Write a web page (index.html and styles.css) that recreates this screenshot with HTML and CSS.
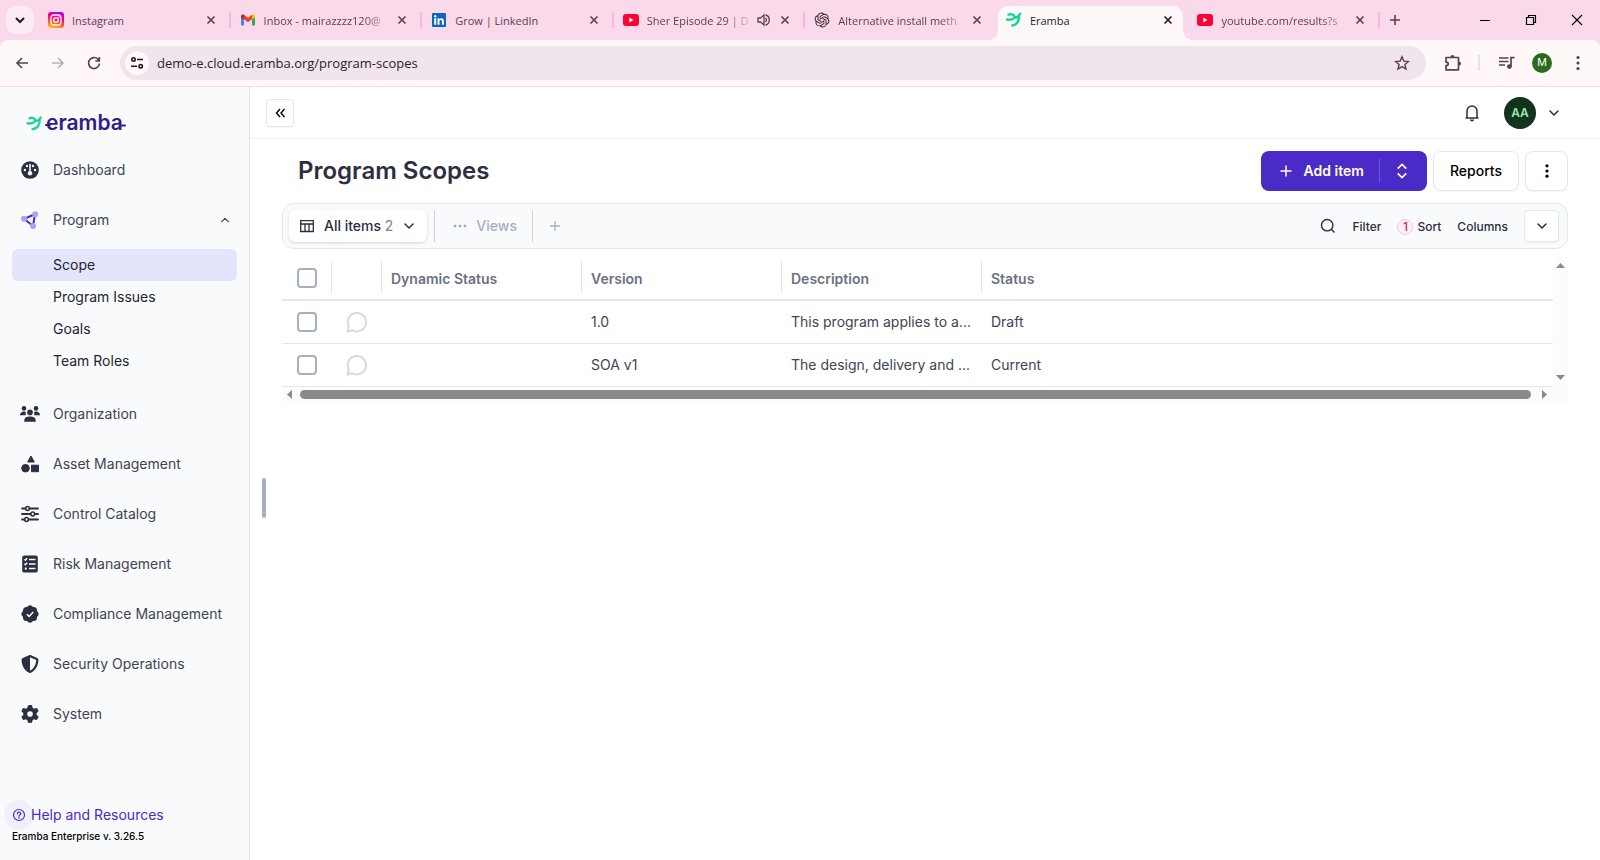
FILE: index.html
```html
<!DOCTYPE html>
<html lang="en">
<head>
<meta charset="utf-8">
<title>Eramba</title>
<link rel="stylesheet" href="styles.css">
</head>
<body>
<svg class="defs" aria-hidden="true">
  <symbol id="close" viewBox="0 0 10 10"><path d="M1.5 1.5l7 7M8.5 1.5l-7 7" fill="none" stroke="currentColor" stroke-width="1.6"/></symbol>
  <symbol id="chevron" viewBox="0 0 12 12"><path d="M2 4l4 4 4-4" fill="none" stroke="currentColor" stroke-width="1.5" stroke-linecap="round" stroke-linejoin="round"/></symbol>
  <symbol id="youtube" viewBox="0 0 16 16"><rect y="2" width="16" height="12" rx="3" fill="#ff0033"/><path d="M6.300 5.500l4.200 2.500-4.200 2.500z" fill="#fff"/></symbol>
  <symbol id="leaf" viewBox="0 0 16 16"><path d="M2.500 2.600C5 1.700 8 2.300 8.500 4.600 8.900 6.600 5 8.200 1.200 7.600M8.500 5.200c2 .6 4.300-.8 5.600-3.400M13 3.800c.5 4.500-1.800 9-6.600 9.700" fill="none" stroke="currentColor" stroke-width="2.500" stroke-linecap="round" stroke-linejoin="round"/></symbol>
  <symbol id="comment" viewBox="0 0 22 22"><path d="M1.500 20.700l1.300-5.200A9.200 9.200 0 1 1 6.600 19.300z" fill="none" stroke="currentColor" stroke-width="2" stroke-linejoin="round"/></symbol>
</svg>

<header class="browser">
  <div class="tabstrip">
    <button class="tab-search" aria-label="Search tabs"><svg width="12" height="12" viewBox="0 0 12 12"><path d="M2 4l4 4 4-4" fill="none" stroke="currentColor" stroke-width="2"/></svg></button>
    <div class="tabs">
      <div class="tab"><button class="tab-main">
        <svg width="16" height="16" viewBox="0 0 16 16"><defs><linearGradient id="ig" x1="0.200" y1="1" x2="0.500" y2="0"><stop offset="0" stop-color="#ffc800"/><stop offset="0.350" stop-color="#ff5a2a"/><stop offset="0.650" stop-color="#ff0078"/><stop offset="1" stop-color="#b900f0"/></linearGradient></defs><rect width="16" height="16" rx="3" fill="url(#ig)"/><rect x="3" y="3" width="10" height="10" rx="3" fill="none" stroke="#fff" stroke-width="1.300"/><circle cx="8" cy="8" r="2.400" fill="none" stroke="#fff" stroke-width="1.300"/><circle cx="11" cy="5" r=".7" fill="#fff"/></svg>
        <span class="tab-title">Instagram</span></button><button class="tab-close" aria-label="Close Instagram"><svg width="10" height="10"><use href="#close"/></svg></button></div>
      <div class="tab"><button class="tab-main">
        <svg width="16" height="16" viewBox="0 0 16 16"><path d="M1 4v8.500a1 1 0 0 0 1 1h2V7z" fill="#4285f4"/><path d="M15 4v8.500a1 1 0 0 1-1 1h-2V7z" fill="#34a853"/><path d="M1 4.200C1 2.400 3 2 4 2.800V7.500L1 5.500z" fill="#c5221f"/><path d="M4 2.800l4 3 4-3v4.500l-4 3-4-3z" fill="#ea4335"/><path d="M12 2.800c1-.8 3-.4 3 1.400v1.300l-3 2z" fill="#fbbc04"/></svg>
        <span class="tab-title faded">Inbox - mairazzzz120@</span></button><button class="tab-close" aria-label="Close Inbox"><svg width="10" height="10"><use href="#close"/></svg></button></div>
      <div class="tab"><button class="tab-main">
        <svg width="16" height="16" viewBox="0 0 16 16"><rect x="1" y="1" width="14" height="14" rx="1" fill="#0a66c2"/><path d="M3.200 6.300h2v6.500h-2zM6.500 6.300h1.900v.9c.9-1.500 4.500-1.500 4.500 1.700v3.900h-2V9.500c0-2-2.400-1.800-2.400 0v3.300h-2z" fill="#fff"/><circle cx="4.200" cy="4.200" r="1.200" fill="#fff"/></svg>
        <span class="tab-title">Grow | LinkedIn</span></button><button class="tab-close" aria-label="Close LinkedIn"><svg width="10" height="10"><use href="#close"/></svg></button></div>
      <div class="tab"><button class="tab-main">
        <svg width="16" height="16"><use href="#youtube"/></svg>
        <span class="tab-title faded">Sher Episode 29 | D</span>
        <svg width="14" height="14" viewBox="0 0 14 14"><path d="M1 5h2.500L7 2v10L3.500 9H1z" fill="none" stroke="currentColor" stroke-width="1.300"/><path d="M8.500 5c1.200 1 1.200 3 0 4M8.500 2c5 1 5 9 0 10" fill="none" stroke="currentColor" stroke-width="1.300"/></svg></button><button class="tab-close" aria-label="Close Sher Episode 29"><svg width="10" height="10"><use href="#close"/></svg></button></div>
      <div class="tab tab-before-active"><button class="tab-main">
        <svg width="16" height="16" viewBox="-1 -1 26 26"><path fill="#2a2228" d="M22.2819 9.8211a5.9847 5.9847 0 0 0-.5157-4.9108 6.0462 6.0462 0 0 0-6.5098-2.9A6.0651 6.0651 0 0 0 4.9807 4.1818a5.9847 5.9847 0 0 0-3.9977 2.9 6.0462 6.0462 0 0 0 .7427 7.0966 5.98 5.98 0 0 0 .511 4.9107 6.051 6.051 0 0 0 6.5146 2.9001A5.9847 5.9847 0 0 0 13.2599 24a6.0557 6.0557 0 0 0 5.7718-4.2058 5.9894 5.9894 0 0 0 3.9977-2.9001 6.0557 6.0557 0 0 0-.7475-7.0729zm-9.022 12.6081a4.4755 4.4755 0 0 1-2.8764-1.0408l.1419-.0804 4.7783-2.7582a.7948.7948 0 0 0 .3927-.6813v-6.7369l2.02 1.1686a.071.071 0 0 1 .038.052v5.5826a4.504 4.504 0 0 1-4.4945 4.4944zm-9.6607-4.1254a4.4708 4.4708 0 0 1-.5346-3.0137l.142.0852 4.783 2.7582a.7712.7712 0 0 0 .7806 0l5.8428-3.3685v2.3324a.0804.0804 0 0 1-.0332.0615L9.74 19.9502a4.4992 4.4992 0 0 1-6.1408-1.6464zM2.3408 7.8956a4.485 4.485 0 0 1 2.3655-1.9728V11.6a.7664.7664 0 0 0 .3879.6765l5.8144 3.3543-2.0201 1.1685a.0757.0757 0 0 1-.071 0l-4.8303-2.7865A4.504 4.504 0 0 1 2.3408 7.872zm16.5963 3.8558L13.1038 8.364 15.1192 7.2a.0757.0757 0 0 1 .071 0l4.8303 2.7913a4.4944 4.4944 0 0 1-.6765 8.1042v-5.6772a.79.79 0 0 0-.407-.667zm2.0107-3.0231l-.142-.0852-4.7735-2.7818a.7759.7759 0 0 0-.7854 0L9.409 9.2297V6.8974a.0662.0662 0 0 1 .0284-.0615l4.8303-2.7866a4.4992 4.4992 0 0 1 6.6802 4.66zM8.3065 12.863l-2.02-1.1638a.0804.0804 0 0 1-.038-.0567V6.0742a4.4992 4.4992 0 0 1 7.3757-3.4537l-.142.0805L8.704 5.459a.7948.7948 0 0 0-.3927.6813zm1.0976-2.3654l2.602-1.4998 2.6069 1.4998v2.9994l-2.5974 1.4997-2.6067-1.4997Z"/></svg>
        <span class="tab-title faded">Alternative install meth</span></button><button class="tab-close" aria-label="Close Alternative install methods"><svg width="10" height="10"><use href="#close"/></svg></button></div>
      <div class="tab tab-active"><button class="tab-main">
        <svg class="leaf" width="16" height="16"><use href="#leaf"/></svg>
        <span class="tab-title">Eramba</span></button><button class="tab-close" aria-label="Close Eramba"><svg width="10" height="10"><use href="#close"/></svg></button></div>
      <div class="tab"><button class="tab-main">
        <svg width="16" height="16"><use href="#youtube"/></svg>
        <span class="tab-title faded">youtube.com/results?s</span></button><button class="tab-close" aria-label="Close YouTube"><svg width="10" height="10"><use href="#close"/></svg></button></div>
    </div>
    <div class="window-side">
      <button class="new-tab" aria-label="New tab"><svg width="12" height="12" viewBox="0 0 12 12"><path d="M6 1v10M1 6h10" stroke="currentColor" stroke-width="1.600"/></svg></button>
      <div class="window-controls">
        <button aria-label="Minimize"><svg width="12" height="12" viewBox="0 0 12 12"><path d="M1 6.500h10" stroke="currentColor"/></svg></button>
        <button aria-label="Restore"><svg width="12" height="12" viewBox="0 0 12 12"><path d="M1.500 3.500h7v7h-7zM3.500 3.500v-2h7v7h-2" fill="none" stroke="currentColor" stroke-width="1.200"/></svg></button>
        <button aria-label="Close window"><svg width="12" height="12" viewBox="0 0 12 12"><path d="M1 1l10 10M11 1L1 11" stroke="currentColor" stroke-width="1.200"/></svg></button>
      </div>
    </div>
  </div>
  <div class="toolbar">
    <div class="nav-buttons">
      <button aria-label="Back"><svg width="16" height="16" viewBox="0 0 16 16"><path d="M14 8H3M8 3L3 8l5 5" fill="none" stroke="currentColor" stroke-width="1.600"/></svg></button>
      <button aria-label="Forward" disabled><svg width="16" height="16" viewBox="0 0 16 16"><path d="M2 8h11M8 3l5 5-5 5" fill="none" stroke="currentColor" stroke-width="1.600"/></svg></button>
      <button aria-label="Reload"><svg width="16" height="16" viewBox="0 0 16 16"><path d="M13.500 8.500a5.500 5.500 0 1 1-1.600-4.400L13.200 5.500M13.300 2v4H9.300" fill="none" stroke="currentColor" stroke-width="1.700"/></svg></button>
    </div>
    <div class="omnibox">
      <button class="site-info" aria-label="View site information"><svg width="14" height="14" viewBox="0 0 14 14"><g fill="none" stroke="currentColor" stroke-width="1.600"><circle cx="3.500" cy="3.500" r="1.700"/><path d="M7 3.500h6M1 10.200h6"/><circle cx="10.700" cy="10.200" r="1.700"/></g></svg></button>
      <input class="url" type="text" aria-label="Address" value="demo-e.cloud.eramba.org/program-scopes">
      <button class="star" aria-label="Bookmark"><svg width="16" height="16" viewBox="0 0 16 16"><path d="M8 1.800l1.800 4.300 4.600.4-3.500 3 1.100 4.500L8 11.600 4 14l1.100-4.500-3.500-3 4.600-.4z" fill="none" stroke="currentColor" stroke-width="1.400"/></svg></button>
    </div>
    <button class="puzzle" aria-label="Extensions"><svg width="18" height="18" viewBox="0 0 18 18"><path d="M2 3.500h12.500v12.300H2v-4.200c3-.2 3-3.200 0-3.400z" fill="none" stroke="currentColor" stroke-width="1.700" stroke-linejoin="round"/><path d="M6.500 3a2 2 0 0 1 4 0zM15 7.500a2 2 0 0 1 0 4z" fill="currentColor"/></svg></button>
    <span class="toolbar-rule"></span>
    <button class="media" aria-label="Media controls"><svg width="18" height="16" viewBox="0 0 18 16"><path d="M1 3h9.500M1 6.500h9.500M1 10h6" stroke="currentColor" stroke-width="1.600"/><path d="M13 11.500V2.700h3.500" fill="none" stroke="currentColor" stroke-width="1.700"/><circle cx="11.400" cy="11.600" r="2.400" fill="currentColor"/></svg></button>
    <button class="profile" aria-label="Profile">M</button>
    <button class="menu" aria-label="Browser menu"><svg width="4" height="16" viewBox="0 0 4 16"><g fill="currentColor"><circle cx="2" cy="2.500" r="1.600"/><circle cx="2" cy="8" r="1.600"/><circle cx="2" cy="13.500" r="1.600"/></g></svg></button>
  </div>
</header>

<div class="app">
  <aside class="sidebar">
    <a class="logo" href="#" aria-label="eramba">
      <svg width="104" height="26" viewBox="0 0 104 26"><g fill="none" stroke="#1fd49a" stroke-width="2.400" stroke-linecap="round"><path d="M4.500 7.300c2.600-1.300 5.600 0 5.600 2 0 2.400-4 3.700-7.600 3M10.100 9.800c2.300.4 4.500-1 5.600-3.300M14.600 8.500c.4 4.500-1.800 9-7.100 9.600"/></g><text x="21" y="19" class="wordmark">eramba</text><g stroke="#2f1f85" stroke-width="2" stroke-linecap="round"><path d="M21 14h4M97 14.500h3"/></g></svg>
    </a>
    <nav class="nav">
      <a class="nav-item" href="#"><svg width="18" height="18" viewBox="0 0 18 18"><circle cx="9" cy="9" r="8.800" fill="#2b2f40"/><g fill="#f9fafc"><circle cx="6" cy="5" r="1.200"/><circle cx="12" cy="5" r="1.200"/><circle cx="3.900" cy="9" r="1.200"/><circle cx="14.100" cy="9" r="1.200"/><rect x="8.200" y="2.800" width="1.600" height="8" rx=".8"/><circle cx="9" cy="12.200" r="2.200"/></g></svg><span>Dashboard</span></a>
      <button class="nav-item" aria-expanded="true"><svg width="18" height="18" viewBox="0 0 18 18"><path d="M14 3L3.300 8 12 15z" fill="none" stroke="#4a2bc7" stroke-width="2"/><g fill="#a8a4f5"><circle cx="14.200" cy="3.200" r="3"/><circle cx="3" cy="7.800" r="3"/><circle cx="12" cy="15" r="3"/></g></svg><span>Program</span><svg class="caret" width="10" height="10"><use href="#chevron"/></svg></button>
      <div class="subnav">
        <a class="current" href="#">Scope</a>
        <a href="#">Program Issues</a>
        <a href="#">Goals</a>
        <a href="#">Team Roles</a>
      </div>
      <a class="nav-item" href="#"><svg width="18" height="18" viewBox="0 0 18 18" overflow="visible"><g fill="#2b2f40"><circle cx="3" cy="3.400" r="2.300"/><circle cx="15" cy="3.400" r="2.300"/><circle cx="9" cy="7.400" r="2.800"/><path d="M-1 10.200c0-4 5-4.500 6-2.700-.6 1-.5 2 0 2.700zM19 10.200c0-4-5-4.500-6-2.700.6 1 .5 2 0 2.700zM3.300 16.800c-.5-5 3-5.400 5.700-5.400s6.200.4 5.700 5.400z"/></g></svg><span>Organization</span></a>
      <a class="nav-item" href="#"><svg width="18" height="18" viewBox="0 0 18 18"><g fill="#2b2f40" stroke="#2b2f40" stroke-linejoin="round"><path d="M10 1l3.300 6H6.700z"/><circle cx="4.500" cy="13.200" r="3.800"/><path d="M10.500 10.200h7v6.500h-7z"/></g></svg><span>Asset Management</span></a>
      <a class="nav-item" href="#"><svg width="18" height="18" viewBox="0 0 18 18"><g fill="none" stroke="#2b2f40" stroke-width="1.800" stroke-linecap="round"><path d="M1 3.500h3.500M8.500 3.500H17M1 9h8.500M14 9h3M1 14.500h2.500M8 14.500h9"/><g stroke-width="1.500"><circle cx="6.500" cy="3.500" r="1.900"/><circle cx="11.700" cy="9" r="1.900"/><circle cx="5.500" cy="14.500" r="1.900"/></g></g></svg><span>Control Catalog</span></a>
      <a class="nav-item" href="#"><svg width="18" height="18" viewBox="0 0 18 18"><rect x="1.200" y=".4" width="15.600" height="17.200" rx="2.200" fill="#2b2f40"/><g stroke="#f9fafc" stroke-width="1.400" fill="none"><path d="M8 4.500h6.500M8 9h6.500M8 13.500h6.500M3.500 4.300l1 1 1.600-2M3.500 8.800l1 1 1.600-2"/></g><rect x="3.800" y="12.600" width="2" height="2" fill="#f9fafc"/></svg><span>Risk Management</span></a>
      <a class="nav-item" href="#"><svg width="18" height="18" viewBox="0 0 18 18"><g fill="#2b2f40"><rect x="2" y="2" width="14" height="14" rx="3.500"/><rect x="2" y="2" width="14" height="14" rx="3.500" transform="rotate(45 9 9)"/></g><path d="M5.800 9.200l2.300 2.200 4.200-4.300" fill="none" stroke="#f9fafc" stroke-width="1.500"/></svg><span>Compliance Management</span></a>
      <a class="nav-item" href="#"><svg width="18" height="18" viewBox="0 0 512 512"><path fill="#2b2f40" d="M256 0c4.600 0 9.200 1 13.400 2.900L457.700 82.800c22 9.300 38.400 31 38.300 57.200c-.5 99.200-41.300 280.700-213.600 363.200c-16.700 8-36.100 8-52.800 0C57.300 420.700 16.500 239.200 16 140c-.1-26.200 16.300-47.900 38.300-57.200L242.700 2.900C246.800 1 251.400 0 256 0zm0 66.800V444.800C394 378 431.100 230.100 432 141.400L256 66.800z"/></svg><span>Security Operations</span></a>
      <a class="nav-item" href="#"><svg width="18" height="18" viewBox="0 0 512 512"><path fill="#2b2f40" d="M495.900 166.600c3.200 8.700 .5 18.400-6.400 24.600l-43.300 39.400c1.100 8.300 1.700 16.800 1.700 25.400s-.6 17.100-1.700 25.400l43.300 39.400c6.900 6.200 9.600 15.900 6.400 24.600c-4.400 11.900-9.700 23.300-15.800 34.300l-4.700 8.100c-6.600 11-14 21.400-22.100 31.200c-5.900 7.200-15.700 9.600-24.500 6.800l-55.700-17.700c-13.400 10.300-28.200 18.900-44 25.400l-12.500 57.100c-2 9.100-9 16.300-18.200 17.800c-13.800 2.300-28 3.500-42.500 3.500s-28.700-1.200-42.500-3.500c-9.200-1.500-16.200-8.700-18.200-17.800l-12.500-57.100c-15.800-6.500-30.600-15.100-44-25.400L83.100 425.900c-8.800 2.800-18.600 .3-24.500-6.800c-8.100-9.800-15.500-20.200-22.100-31.200l-4.700-8.100c-6.100-11-11.400-22.400-15.800-34.300c-3.200-8.700-.5-18.400 6.400-24.600l43.300-39.400C64.600 273.100 64 264.600 64 256s.6-17.100 1.700-25.400L22.400 191.200c-6.900-6.200-9.600-15.900-6.400-24.600c4.400-11.900 9.700-23.300 15.800-34.300l4.700-8.100c6.600-11 14-21.400 22.100-31.200c5.900-7.200 15.700-9.600 24.500-6.800l55.700 17.700c13.400-10.300 28.200-18.900 44-25.400l12.500-57.100c2-9.100 9-16.300 18.200-17.800C227.300 1.200 241.500 0 256 0s28.700 1.200 42.500 3.500c9.200 1.500 16.200 8.700 18.200 17.800l12.500 57.100c15.800 6.500 30.600 15.100 44 25.400l55.700-17.700c8.800-2.800 18.600-.3 24.500 6.800c8.100 9.800 15.500 20.200 22.100 31.200l4.700 8.100c6.100 11 11.400 22.400 15.800 34.300zM256 336a80 80 0 1 0 0-160 80 80 0 1 0 0 160z"/></svg><span>System</span></a>
    </nav>
    <footer class="sidebar-foot">
      <a class="help" href="#"><span class="help-icon"><svg width="14" height="14" viewBox="0 0 14 14"><g fill="none" stroke="currentColor" stroke-width="1.200" stroke-linecap="round"><circle cx="7" cy="7" r="5.500"/><path d="M5.400 5.800c0-2.200 3.300-2.100 3.300-.1C8.700 7 7 6.900 7 8.100"/></g><circle cx="7" cy="9.900" r=".8" fill="currentColor"/></svg></span><span>Help and Resources</span></a>
      <p class="version">Eramba Enterprise v. 3.26.5</p>
    </footer>
  </aside>

  <div class="gutter"><span class="grip"></span></div>

  <div class="content">
    <div class="topbar">
      <button class="collapse" aria-label="Collapse sidebar"><svg width="12" height="12" viewBox="0 0 12 12"><path d="M6 2L2.500 6 6 10M10.500 2L7 6l3.500 4" fill="none" stroke="currentColor" stroke-width="1.400"/></svg></button>
      <div class="account">
        <button class="bell" aria-label="Notifications"><svg width="16" height="18" viewBox="0 0 16 18"><path d="M3 13.500V7a5 5 0 0 1 10 0v6.500M1.500 14h13" fill="none" stroke="currentColor" stroke-width="1.500"/><path d="M6 15.600h4a2 2 0 0 1-4 0z" fill="currentColor"/></svg></button>
        <button class="avatar">AA</button>
        <button class="account-menu" aria-label="Account menu"><svg width="12" height="12"><use href="#chevron"/></svg></button>
      </div>
    </div>

    <main class="page">
      <div class="page-head">
        <h1>Program Scopes</h1>
        <div class="actions">
          <div class="split">
            <button class="add"><svg width="12" height="12" viewBox="0 0 12 12"><path d="M6 .5v11M.5 6h11" stroke="currentColor" stroke-width="1.500"/></svg>Add item</button>
            <button class="add-more" aria-label="More add options"><svg width="12" height="16" viewBox="0 0 12 16"><path d="M1.700 5.700L6 1.500l4.300 4.200M1.700 10.300L6 14.500l4.300-4.200" fill="none" stroke="currentColor" stroke-width="1.700"/></svg></button>
          </div>
          <button class="outlined">Reports</button>
          <button class="outlined more" aria-label="More actions"><svg width="4" height="16" viewBox="0 0 4 16"><g fill="currentColor"><circle cx="2" cy="2.800" r="1.600"/><circle cx="2" cy="8" r="1.600"/><circle cx="2" cy="13.200" r="1.600"/></g></svg></button>
        </div>
      </div>

      <div class="viewbar">
        <button class="all-items"><svg width="14" height="14" viewBox="0 0 14 14"><path d="M.7 1.700h12.600v10.800H.7zM.7 5h12.600M5 5v7.500M9 5v7.500" fill="none" stroke="currentColor" stroke-width="1.300"/></svg><span>All items <span class="count">2</span></span><svg width="12" height="12"><use href="#chevron"/></svg></button>
        <button class="views"><svg width="14" height="4" viewBox="0 0 14 4"><g fill="currentColor"><circle cx="2" cy="2" r="1.500"/><circle cx="7" cy="2" r="1.500"/><circle cx="12" cy="2" r="1.500"/></g></svg>Views</button>
        <button class="add-view" aria-label="Add view"><svg width="10" height="10" viewBox="0 0 10 10"><path d="M5 0v10M0 5h10" stroke="currentColor" stroke-width="1.300"/></svg></button>
        <div class="tools">
          <button aria-label="Search"><svg width="16" height="16" viewBox="0 0 16 16"><circle cx="7.200" cy="7.200" r="5.700" fill="none" stroke="currentColor" stroke-width="1.400"/><path d="M11.500 11.500l3 3" stroke="currentColor" stroke-width="1.400"/></svg></button>
          <button class="tool">Filter</button>
          <button class="tool sort"><span class="badge">1</span>Sort</button>
          <button class="tool">Columns</button>
          <button class="expand" aria-label="Expand"><svg width="12" height="12"><use href="#chevron"/></svg></button>
        </div>
      </div>

      <div class="grid">
        <table>
          <colgroup><col class="c-icon"><col class="c-icon"><col class="c-data"><col class="c-data"><col class="c-data"><col></colgroup>
          <thead>
            <tr>
              <th><div class="head pick"><input type="checkbox" aria-label="Select all"></div></th>
              <th><div class="head"></div></th>
              <th><div class="head">Dynamic Status</div></th>
              <th><div class="head">Version</div></th>
              <th><div class="head">Description</div></th>
              <th><div class="head last">Status</div></th>
            </tr>
          </thead>
          <tbody>
            <tr>
              <td class="pick"><input type="checkbox" aria-label="Select 1.0"></td>
              <td class="note"><button aria-label="Comments"><svg width="22" height="22"><use href="#comment"/></svg></button></td>
              <td></td><td>1.0</td><td>This program applies to a...</td><td>Draft</td>
            </tr>
            <tr>
              <td class="pick"><input type="checkbox" aria-label="Select SOA v1"></td>
              <td class="note"><button aria-label="Comments"><svg width="22" height="22"><use href="#comment"/></svg></button></td>
              <td></td><td>SOA v1</td><td>The design, delivery and ...</td><td>Current</td>
            </tr>
          </tbody>
        </table>
        <div class="vscroll"><svg width="9" height="5"><path d="M0 5l4.500-5L9 5z" fill="#8a8a8a"/></svg><svg width="9" height="5"><path d="M0 0l4.500 5L9 0z" fill="#8a8a8a"/></svg></div>
        <div class="hscroll"><svg width="5" height="9"><path d="M5 0L0 4.500 5 9z" fill="#8a8a8a"/></svg><span class="thumb"></span><svg width="5" height="9"><path d="M0 0l5 4.500L0 9z" fill="#8a8a8a"/></svg></div>
      </div>
    </main>
  </div>
</div>
</body>
</html>
```
FILE: styles.css
```css
* { box-sizing: border-box; }

body {
  margin: 0;
  min-height: 100vh;
  display: flex;
  flex-direction: column;
  font-family: Inter, sans-serif;
  font-size: 14px;
  line-height: 20px;
  color: #3e4553;
  background: #fff;
}

button {
  margin: 0;
  padding: 0;
  border: 0;
  background: none;
  font: inherit;
  color: inherit;
  display: inline-flex;
  align-items: center;
  justify-content: center;
}

a { color: inherit; text-decoration: none; }
svg { display: block; flex: none; }
.defs { display: none; }

/* Browser chrome */
.browser {
  font-family: "Open Sans", "Noto Sans", sans-serif;
  color: #5a3f50;
  background: #fad9ea;
}

.tabstrip { display: flex; height: 40px; }

.tab-search {
  width: 28px;
  height: 28px;
  margin: 6px 4px 6px 6px;
  border-radius: 10px;
  background: #fdebf4;
  color: #1f1a1e;
}

.tabs { flex: 1; display: flex; min-width: 0; }

.tab {
  flex: 1 1 0;
  min-width: 0;
  display: flex;
  align-items: center;
  gap: 6px;
  padding: 0 11px 0 10px;
  position: relative;
}

.tab::after {
  content: "";
  position: absolute;
  right: -1px;
  top: 12px;
  width: 2px;
  height: 16px;
  background: #fdb3e0;
}

.tab-before-active::after { display: none; }

.tab-main {
  flex: 1;
  min-width: 0;
  gap: 8px;
  justify-content: flex-start;
}

.tab-title {
  flex: 1;
  min-width: 0;
  padding-top: 1px;
  overflow: hidden;
  white-space: nowrap;
  text-align: left;
  font-size: 11px;
  line-height: 20px;
}

.faded { mask-image: linear-gradient(to right, #000 calc(100% - 24px), #0003); }

.tab-close { width: 16px; height: 16px; }

.tab-active { color: #1f1a1e; isolation: isolate; }

.tab-active::before {
  content: "";
  position: absolute;
  z-index: -1;
  inset: 6px 4px 0 2px;
  border-radius: 10px 10px 0 0;
  background: #fff8f8;
}

/* Flared feet that join the active tab to the toolbar */
.tab-active::after {
  z-index: -1;
  inset: auto -6px 0 -8px;
  width: auto;
  height: 10px;
  background:
    radial-gradient(circle at 0 0, transparent 10px, #fff8f8 10px) left / 10px 10px no-repeat,
    radial-gradient(circle at 100% 0, transparent 10px, #fff8f8 10px) right / 10px 10px no-repeat;
}

.leaf { color: #12d69c; }

.window-side {
  width: 221px;
  display: flex;
  justify-content: space-between;
}

.new-tab { width: 32px; }
.window-controls { display: flex; color: #000; }
.window-controls button { width: 46px; }

.toolbar {
  display: flex;
  align-items: center;
  height: 47px;
  padding: 0 16px 1px 14px;
  border-bottom: 1px solid #eddde6;
  border-radius: 8px 8px 0 0;
  background: #fff8f8;
}

.nav-buttons { display: flex; gap: 20px; margin-right: 18px; }
.nav-buttons button:disabled { color: #b9adb4; }

.omnibox {
  flex: 1;
  display: flex;
  align-items: center;
  height: 34px;
  padding: 0 16px 0 5px;
  border-radius: 17px;
  background: #f0e4ed;
}

.site-info {
  width: 24px;
  height: 24px;
  border-radius: 50%;
  background: #fff8f8;
  color: #1f1a1e;
}

.url {
  flex: 1;
  min-width: 0;
  padding: 0 8px;
  border: 0;
  background: none;
  font: 13px/20px "Open Sans", "Noto Sans", sans-serif;
  color: #2b2230;
}

.puzzle { margin-left: 18px; }

.toolbar-rule {
  width: 2px;
  height: 16px;
  margin: 0 18px 0 16px;
  background: #fad9ea;
}

.profile {
  width: 20px;
  height: 20px;
  margin: 0 24px 0 16px;
  border-radius: 50%;
  background: #2c6a1c;
  color: #fff;
  font-family: Roboto, sans-serif;
  font-size: 11px;
}

.menu { margin-right: 4px; }

/* Application shell */
.app { flex: 1; display: flex; }

.sidebar {
  width: 250px;
  flex: none;
  display: flex;
  flex-direction: column;
  border-right: 1px solid #e2e6ec;
  background: #f9fafc;
}

.logo { padding: 24px 25px 8px; }

.wordmark {
  font: 600 21px Inter, sans-serif;
  fill: #2f1f85;
}

.nav { display: flex; flex-direction: column; }

.nav-item {
  display: flex;
  align-items: center;
  justify-content: flex-start;
  gap: 14px;
  height: 50px;
  padding: 0 19px 0 21px;
}

.caret { margin-left: auto; transform: rotate(180deg); }

.subnav {
  display: flex;
  flex-direction: column;
  padding: 4px 12px 12px;
  color: #1f2430;
}

.subnav a { padding: 6px 41px; border-radius: 6px; }
.subnav .current { background: #e3e5fd; }

.sidebar-foot { margin-top: auto; padding: 0 4px 18px; }

.help { display: flex; align-items: center; color: #4a2bc7; }

.help-icon {
  width: 30px;
  height: 30px;
  display: flex;
  align-items: center;
  justify-content: center;
  margin-right: -3px;
  border-radius: 50%;
  background: #f1effb;
}

.version {
  margin: 0 0 0 8px;
  font-size: 10px;
  line-height: 12px;
  font-weight: 500;
  color: #000;
}

.gutter {
  width: 16px;
  display: flex;
  align-items: center;
  justify-content: flex-end;
}

.grip {
  width: 4px;
  height: 40px;
  margin-top: 48px;
  border-radius: 2px;
  background: #a5afc1;
  position: relative;
}

.content { flex: 1; min-width: 0; }

.topbar {
  display: flex;
  align-items: center;
  justify-content: space-between;
  height: 52px;
  margin-left: -16px;
  padding: 0 40px 0 16px;
  border-bottom: 1px solid #eef1f5;
}

.collapse {
  width: 28px;
  height: 28px;
  border: 1px solid #e2e8f0;
  border-radius: 4px;
  background: #fff;
  color: #000;
  box-shadow: 0 1px 2px #0000000d;
}

.account { display: flex; align-items: center; color: #2b2f40; }

.avatar {
  width: 32px;
  height: 32px;
  margin: 0 12px 0 24px;
  border-radius: 50%;
  background: #10341c;
  color: #a3e3b4;
  font-size: 12px;
  font-weight: 600;
}

.page { padding: 12px 32px 0 16px; }

.page-head {
  display: flex;
  align-items: center;
  justify-content: space-between;
  margin-bottom: 12px;
}

h1 {
  margin: 0 0 0 16px;
  font-size: 24px;
  line-height: 32px;
  font-weight: 600;
  color: #2b2f40;
}

.actions { display: flex; gap: 6px; font-weight: 500; color: #000; }

.split {
  display: flex;
  align-items: center;
  height: 40px;
  border-radius: 8px;
  background: #4a2bc7;
  color: #fff;
  font-weight: 600;
}

.add { gap: 12px; padding: 2px 15px 2px 19px; border-right: 1px solid #6e55d3; }
.add-more { width: 47px; padding-right: 2px; }

.outlined {
  height: 40px;
  padding: 0 16px;
  border: 1px solid #e2e8f0;
  border-radius: 8px;
  background: #fff;
  box-shadow: 0 1px 2px #0000000d;
}

.more { width: 43px; padding: 0; }

.viewbar {
  display: flex;
  align-items: center;
  height: 46px;
  padding: 0 8px 0 6px;
  border: 1px solid #e2e8f0;
  border-radius: 12px;
  background: #f9fafc;
  color: #2b2f40;
}

.all-items {
  gap: 10px;
  height: 32px;
  padding: 0 12px 0 11px;
  margin-right: 7px;
  border-radius: 6px;
  background: #fff;
  font-weight: 500;
  box-shadow: 0 1px 3px #00000026;
}

.count { font-weight: 400; color: #7d838f; }

.views {
  gap: 9px;
  height: 32px;
  padding: 0 15px 0 18px;
  border: solid #cbd5e1;
  border-width: 0 1px;
  font-weight: 500;
  color: #a5afc1;
}

.add-view { padding: 0 17px; color: #a5afc1; }

.tools {
  display: flex;
  align-items: center;
  gap: 16px;
  margin-left: auto;
  font-size: 12px;
  font-weight: 500;
}

.tool { padding-top: 1px; }
.sort { gap: 4px; }

.badge {
  width: 16px;
  height: 16px;
  border: 1px solid #fbc4dc;
  border-radius: 50%;
  background: #fdf0f6;
  color: #d1246f;
  line-height: 14px;
}

.expand {
  width: 35px;
  height: 32px;
  border: 1px solid #e2e8f0;
  border-radius: 4px;
  background: #fff;
  box-shadow: 0 1px 2px #0000000d;
}

/* Data grid */
.grid {
  display: grid;
  grid-template-columns: 1fr 15px;
  margin-top: 8px;
}

table {
  width: 100%;
  table-layout: fixed;
  border-collapse: separate;
  border-spacing: 0;
}

.c-icon { width: 50px; }
.c-data { width: 200px; }

th {
  padding: 4px 0 5px;
  border-bottom: 2px solid #e2e8f0;
  text-align: left;
  font-weight: 600;
  color: #6a7280;
}

.head {
  height: 33px;
  padding: 8px 9px 0;
  border-right: 1px solid #e2e8f0;
}

.last { border-right: 0; }

td {
  height: 43px;
  padding: 0 9px;
  border-bottom: 1px solid #e2e8f0;
  white-space: nowrap;
}

.pick { padding: 7px 15px 0; }
td.pick { padding: 0 15px; }
td.note { padding: 0 14px; }

input[type="checkbox"] {
  appearance: none;
  display: block;
  width: 20px;
  height: 20px;
  margin: 0;
  border: 2px solid #a5afc1;
  border-radius: 4px;
  background: #fff;
}

.note button { display: flex; color: #d3dae4; }

.vscroll {
  grid-row: 1 / 3;
  grid-column: 2;
  display: flex;
  flex-direction: column;
  align-items: center;
  justify-content: space-between;
  padding: 6px 0 22px;
  background: #fcfcfc;
}

.hscroll {
  display: flex;
  align-items: center;
  gap: 8px;
  height: 15px;
  padding: 0 6px 0 5px;
  background: #fcfcfc;
}

.thumb { flex: 1; height: 9px; margin-right: 3px; border-radius: 5px; background: #8a8a8a; }
```
